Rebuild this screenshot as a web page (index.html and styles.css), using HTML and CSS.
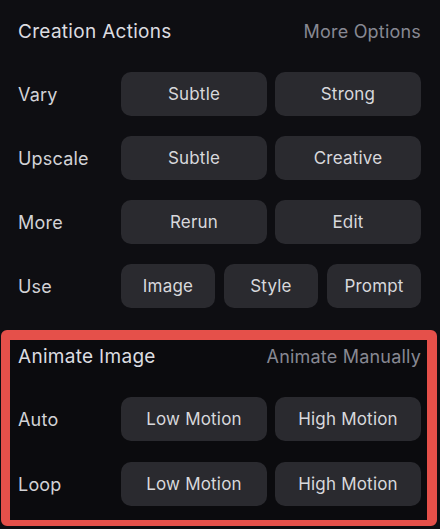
FILE: index.html
```html
<!DOCTYPE html>
<html>
<head>
<meta charset="utf-8">
<link rel="stylesheet" href="styles.css">
</head>
<body>
<div class="panel">
  <div class="head">
    <span class="title">Creation Actions</span>
    <span class="link">More Options</span>
  </div>
  <div class="rows">
    <div class="row">
      <span class="label">Vary</span>
      <div class="btns two"><button class="btn">Subtle</button><button class="btn">Strong</button></div>
    </div>
    <div class="row">
      <span class="label">Upscale</span>
      <div class="btns two"><button class="btn">Subtle</button><button class="btn">Creative</button></div>
    </div>
    <div class="row">
      <span class="label">More</span>
      <div class="btns two"><button class="btn">Rerun</button><button class="btn">Edit</button></div>
    </div>
    <div class="row">
      <span class="label">Use</span>
      <div class="btns three"><button class="btn">Image</button><button class="btn">Style</button><button class="btn">Prompt</button></div>
    </div>
  </div>
</div>
<div class="animate">
  <div class="head small">
    <span class="title">Animate Image</span>
    <span class="link">Animate Manually</span>
  </div>
  <div class="rows anim-rows">
    <div class="row">
      <span class="label">Auto</span>
      <div class="btns two"><button class="btn">Low Motion</button><button class="btn">High Motion</button></div>
    </div>
    <div class="row">
      <span class="label">Loop</span>
      <div class="btns two"><button class="btn">Low Motion</button><button class="btn">High Motion</button></div>
    </div>
  </div>
</div>
</body>
</html>
```
FILE: styles.css
```css
html, body {
  margin: 0;
  padding: 0;
  background: #0e0e12;
  height: 100%;
  overflow: hidden;
}
body {
  font-family: Inter, "Noto Sans", sans-serif;
  color: #d6d6da;
}
.panel {
  padding: 14px 19px 0 18px;
}
.head {
  height: 34px;
  display: flex;
  align-items: center;
  justify-content: space-between;
}
.title {
  font-size: 19px;
  color: #dcdce0;
  letter-spacing: 0.3px;
}
.link {
  font-size: 18px;
  color: #878892;
  letter-spacing: 0.2px;
}
.rows {
  display: flex;
  flex-direction: column;
  gap: 20px;
  margin-top: 24px;
}
.row {
  display: grid;
  grid-template-columns: 103px 1fr;
  align-items: center;
  height: 44px;
}
.label {
  font-size: 18px;
  color: #d2d2d6;
  letter-spacing: 0.2px;
}
.btns {
  display: grid;
  height: 100%;
}
.btns.two {
  grid-template-columns: 1fr 1fr;
  gap: 8px;
}
.btns.three {
  grid-template-columns: 1fr 1fr 1fr;
  gap: 9px;
}
.btn {
  font-family: inherit;
  font-size: 17px;
  color: #d8d8dc;
  background: #2a2a2f;
  border: none;
  border-radius: 10px;
  padding: 0;
  height: 100%;
  letter-spacing: 0.2px;
}
.animate {
  margin: 22px 3px 0 1px;
  border-style: solid;
  border-color: #e5504a;
  border-width: 10px 10px 6px 9px;
  border-radius: 6px;
  padding: 0 6px 14px 8px;
  background: #0b0b0e;
}
.head.small {
  height: 32px;
}
.anim-rows {
  margin-top: 25px;
  gap: 21px;
}
```
